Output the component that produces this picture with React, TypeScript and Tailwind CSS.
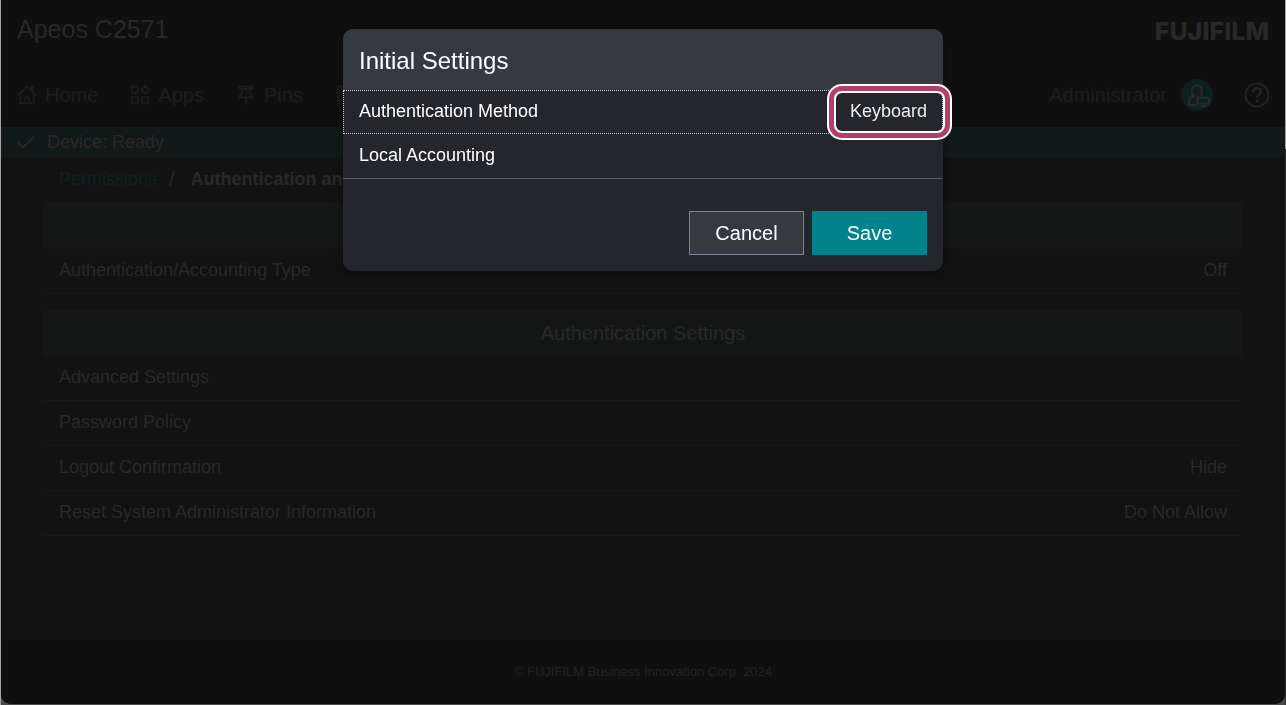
import type { ReactNode } from "react";

type IconProps = { children: ReactNode; className?: string };

function Icon({ children, className = "size-5" }: IconProps) {
  return (
    <svg
      viewBox="0 0 20 20"
      className={className}
      fill="none"
      stroke="currentColor"
      strokeWidth="1.6"
      aria-hidden="true"
    >
      {children}
    </svg>
  );
}

function HomeIcon() {
  return (
    <Icon>
      <path d="M1 10.2 10 1.6l9 8.6M3.2 8.4v10h13.6v-10M14 5V1.6h2.2v5.6M8 18.4v-6.2h4v6.2" />
    </Icon>
  );
}

function AppsIcon() {
  return (
    <Icon>
      <rect x="1.5" y="1.5" width="6.5" height="6.5" rx="0.8" />
      <rect x="1.5" y="12" width="6.5" height="6.5" rx="0.8" />
      <rect x="12" y="12" width="6.5" height="6.5" rx="0.8" />
      <path d="m15.2.9 4 4-4 4-4-4z" strokeLinejoin="round" />
    </Icon>
  );
}

function PinIcon() {
  return (
    <Icon>
      <path
        d="M3.500 1.800h13v2.100h-13zM5.800 4v4.400L3.200 12.400h13.600l-2.600-4V4M10 12.400v6.800"
        strokeLinejoin="round"
      />
    </Icon>
  );
}

function AddressBookIcon() {
  return (
    <Icon>
      <path d="M3 1h14v18H3zM1 4.5h4M1 8.2h4M1 11.8h4M1 15.5h4M6.5 1v18" />
    </Icon>
  );
}

function UserIcon() {
  return (
    <svg viewBox="0 0 32 32" className="size-8" fill="none" stroke="#2a2a2a" strokeWidth="2" aria-hidden="true">
      <circle cx="16" cy="16" r="16" fill="#0e1f20" stroke="none" />
      <path
        d="M15 26H8v-3c0-3 1.8-5 4.8-6-1.1-1.200-1.900-2.800-1.900-5 0-3.400 1.900-5.600 5-5.600s5 2.200 5 5.600c0 2-.5 3.200-1.400 4.400"
        strokeLinejoin="round"
      />
      <path d="M16.500 18.800H28v6H16.500z" strokeLinejoin="round" />
      <path d="M19.500 27h6" strokeWidth="2.400" />
    </svg>
  );
}

function HelpIcon() {
  return (
    <svg viewBox="0 0 26 26" className="size-[26px]" fill="none" stroke="#262626" aria-hidden="true">
      <circle cx="13" cy="13" r="11.5" strokeWidth="1.6" />
      <path d="M9.300 10.200c0-2.400 1.500-3.900 3.800-3.900s3.700 1.400 3.700 3.400c0 2.700-3.600 2.900-3.600 5.800" strokeWidth="2.300" />
      <circle cx="13.200" cy="19" r="1.600" fill="#262626" stroke="none" />
    </svg>
  );
}

function NavLink({ icon, children }: { icon: ReactNode; children?: ReactNode }) {
  return (
    <a href="#" className="flex items-center gap-2 text-xl leading-6">
      {icon}
      {children}
    </a>
  );
}

function SettingRow({ label, value }: { label: string; value?: string }) {
  return (
    <button
      type="button"
      className="flex h-[45px] w-full items-center justify-between border-b border-[#181818] px-4 pb-0.5 text-left text-lg"
    >
      <span>{label}</span>
      <span>{value}</span>
    </button>
  );
}

function SettingsDialog() {
  return (
    <div className="fixed inset-0 flex items-start justify-center pt-[29px]">
      <section
        role="dialog"
        aria-modal="true"
        aria-labelledby="dialog-title"
        className="w-[600px] rounded-[10px] bg-[#25262b] text-white shadow-[0_2px_8px_rgba(0,0,0,0.4)]"
      >
        <h2
          id="dialog-title"
          className="rounded-t-[10px] bg-linear-to-b from-[#35383e] to-[#383a42] px-4 pt-4 pb-[13px] text-2xl leading-8"
        >
          Initial Settings
        </h2>
        <button
          type="button"
          className="flex h-11 w-full items-center justify-between border border-dotted border-[#c8c8c8] px-[15px] pb-0.5 text-left text-lg"
        >
          <span>Authentication Method</span>
          <span className="relative text-[#eeeeee]">
            Keyboard
            <span
              aria-hidden="true"
              className="absolute -top-1.5 -right-[18px] -bottom-2 -left-4 rounded-lg border-2 border-white shadow-[0_0_0_5px_#b33d6b,0_0_0_7px_#ffffff]"
            />
          </span>
        </button>
        <button
          type="button"
          className="flex h-[45px] w-full items-center border-b border-[#555b68] px-4 pb-0.5 text-left text-lg"
        >
          Local Accounting
        </button>
        <div className="flex justify-end gap-2 px-4 pt-8 pb-4 text-xl">
          <button type="button" className="h-11 w-[115px] border border-[#7b8497] bg-[#36393f]">
            Cancel
          </button>
          <button type="button" className="h-11 w-[115px] bg-[#00838c]">
            Save
          </button>
        </div>
      </section>
    </div>
  );
}

export default function App() {
  return (
    <div className="flex min-h-screen bg-[#4a4a4a] font-['Liberation_Sans',Arial,sans-serif]">
      <div className="w-px bg-[#a3a3a3]" />
      <div className="mb-px flex min-w-0 flex-1 flex-col overflow-hidden rounded-b-[10px] bg-[#121212] text-[#282828]">
        <header className="bg-[#0f0f0f]">
          <div className="flex items-end justify-between px-4 pt-[11px]">
            <h1 className="text-[25px] leading-9">Apeos C2571</h1>
            <span className="font-[Inter,sans-serif] text-[25px] leading-8 font-extrabold">FUJIFILM</span>
          </div>
          <div className="flex items-center justify-between pt-8 pr-[15px] pb-4 pl-4 text-[#1d1d1d]">
            <nav className="flex items-center gap-8">
              <NavLink icon={<HomeIcon />}>Home</NavLink>
              <NavLink icon={<AppsIcon />}>Apps</NavLink>
              <NavLink icon={<PinIcon />}>Pins</NavLink>
              <NavLink icon={<AddressBookIcon />} />
            </nav>
            <div className="flex items-center">
              <span className="text-xl">Administrator</span>
              <button type="button" aria-label="Account" className="ml-3.5">
                <UserIcon />
              </button>
              <button type="button" aria-label="Help" className="ml-[31px]">
                <HelpIcon />
              </button>
            </div>
          </div>
        </header>

        <div className="flex h-[30px] items-center gap-3 bg-[#101a18] px-4 text-lg">
          <Icon className="size-[18px]">
            <path d="m.8 10.5 5.800 5.700L19 4" strokeWidth="2" />
          </Icon>
          Device: Ready
        </div>

        <main className="mx-auto w-full max-w-[1200px]">
          <div className="flex h-[45px] items-center gap-3 px-4 pb-0.5 text-lg">
            <a href="#" className="text-[#102021]">
              Permissions
            </a>
            <span className="text-xl">/</span>
            <h2 className="ml-1 font-bold">Authentication and Accounting</h2>
          </div>
          <div className="h-[47px] bg-[#131615]" />
          <SettingRow label="Authentication/Accounting Type" value="Off" />
          <h3 className="mt-4 flex h-[46px] items-center justify-center bg-[#131615] text-xl">
            Authentication Settings
          </h3>
          <SettingRow label="Advanced Settings" />
          <SettingRow label="Password Policy" />
          <SettingRow label="Logout Confirmation" value="Hide" />
          <SettingRow label="Reset System Administrator Information" value="Do Not Allow" />
        </main>

        <footer className="mt-auto flex h-16 items-center justify-center bg-[#0f0f0f] text-[13px] text-[#222222]">
          © FUJIFILM Business Innovation Corp. 2024
        </footer>
      </div>
      <div className="flex w-px flex-col bg-[#333333]">
        <div className="h-[149px] bg-[#a3a3a3]" />
      </div>
      <SettingsDialog />
    </div>
  );
}
